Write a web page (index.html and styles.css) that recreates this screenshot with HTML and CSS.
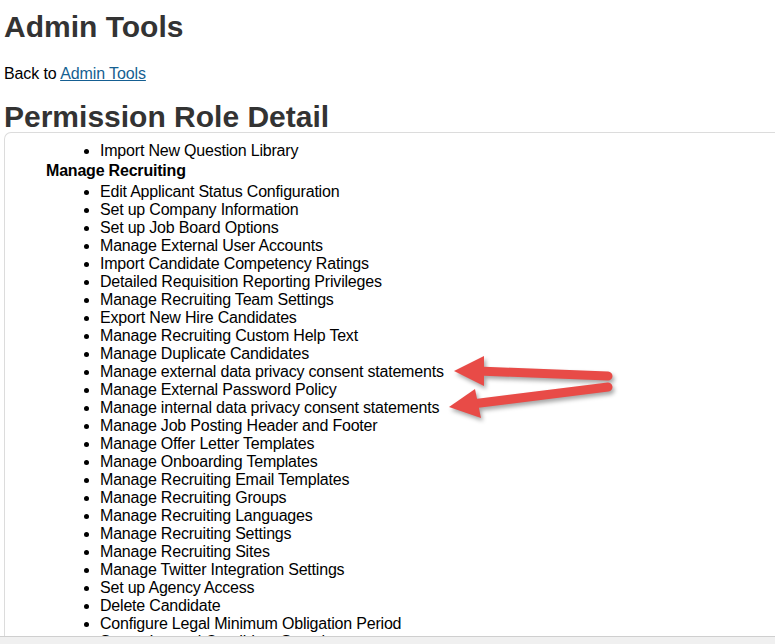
FILE: index.html
```html
<!DOCTYPE html>
<html>
<head>
<meta charset="utf-8">
<title>Permission Role Detail</title>
<link rel="stylesheet" href="styles.css">
</head>
<body>
<div class="page">
  <h1 class="title title-top">Admin Tools</h1>
  <p class="back">Back to <a href="#">Admin Tools</a></p>
  <h1 class="title title-sub">Permission Role Detail</h1>
  <div class="panel">
    <div class="panel-body">
      <ul class="perm-list">
        <li>Import New Question Library</li>
      </ul>
      <div class="group">Manage Recruiting</div>
      <ul class="perm-list">
        <li>Edit Applicant Status Configuration</li>
        <li>Set up Company Information</li>
        <li>Set up Job Board Options</li>
        <li>Manage External User Accounts</li>
        <li>Import Candidate Competency Ratings</li>
        <li>Detailed Requisition Reporting Privileges</li>
        <li>Manage Recruiting Team Settings</li>
        <li>Export New Hire Candidates</li>
        <li>Manage Recruiting Custom Help Text</li>
        <li>Manage Duplicate Candidates</li>
        <li>Manage external data privacy consent statements</li>
        <li>Manage External Password Policy</li>
        <li>Manage internal data privacy consent statements</li>
        <li>Manage Job Posting Header and Footer</li>
        <li>Manage Offer Letter Templates</li>
        <li>Manage Onboarding Templates</li>
        <li>Manage Recruiting Email Templates</li>
        <li>Manage Recruiting Groups</li>
        <li>Manage Recruiting Languages</li>
        <li>Manage Recruiting Settings</li>
        <li>Manage Recruiting Sites</li>
        <li>Manage Twitter Integration Settings</li>
        <li>Set up Agency Access</li>
        <li>Delete Candidate</li>
        <li>Configure Legal Minimum Obligation Period</li>
        <li>Set up Internal Candidate Search</li>
      </ul>
    </div>
  </div>
  <div class="hscroll"></div>
</div>
<svg class="arrows" width="775" height="644" viewBox="0 0 775 644">
  <g class="arrow">
    <line x1="608" y1="376" x2="478" y2="371" />
    <polygon points="454,371 484,356 484,386" />
  </g>
  <g class="arrow">
    <line x1="608" y1="387" x2="472" y2="404" />
    <polygon points="449,407 475,389 481,418" />
  </g>
</svg>
</body>
</html>
```
FILE: styles.css
```css
html, body {
  margin: 0;
  padding: 0;
  background: #ffffff;
  overflow: hidden;
}
body {
  width: 775px;
  height: 644px;
  position: relative;
  font-family: "Liberation Sans", Arial, sans-serif;
  color: #000;
}
.page {
  padding-left: 4px;
}
.title {
  font-family: "Liberation Sans", Arial, sans-serif;
  font-weight: bold;
  font-size: 30px;
  line-height: 30px;
  color: #333333;
  margin: 0;
}
.title-top {
  padding-top: 12px;
}
.back {
  font-size: 16px;
  line-height: 18px;
  letter-spacing: -0.1px;
  margin: 23px 0 0 0;
}
.back a {
  color: #155f92;
  text-decoration: underline;
}
.title-sub {
  margin-top: 19px;
}
.panel {
  height: 503px;
  margin-right: -40px;
  border-top: 1px solid #dcdcdc;
  border-left: 1px solid #dcdcdc;
  border-top-left-radius: 7px;
  overflow: hidden;
}
.panel-body {
  padding: 9px 0 0 41px;
  font-size: 16px;
  line-height: 18px;
  letter-spacing: -0.2px;
}
.perm-list {
  margin: 0;
  padding-left: 54px;
  list-style: disc;
}
.group {
  font-weight: bold;
  margin: 2px 0 3px 0;
}
.hscroll {
  margin-left: -4px;
  height: 8px;
  border-top: 1px solid #cfcfcf;
  background: #f0f0f0;
}
.arrows {
  position: absolute;
  left: 0;
  top: 0;
  pointer-events: none;
}
.arrow {
  filter: drop-shadow(2px 3px 2px rgba(0, 0, 0, 0.35));
}
.arrow line {
  stroke: #e84b47;
  stroke-width: 9;
  stroke-linecap: round;
}
.arrow polygon {
  fill: #e84b47;
}
```
